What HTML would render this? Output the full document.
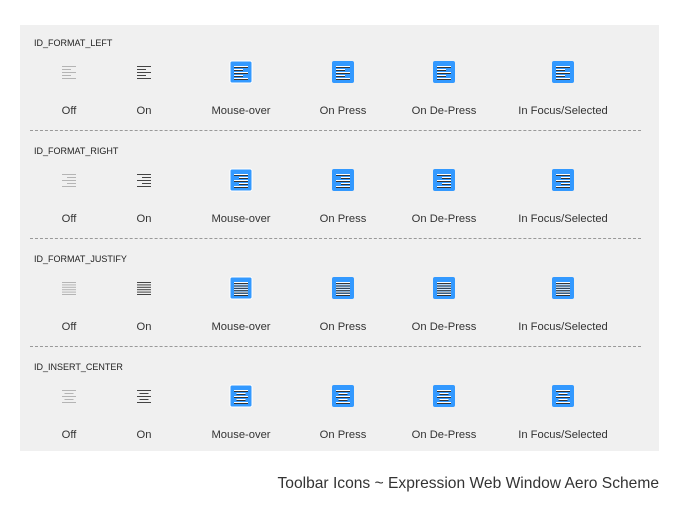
<!DOCTYPE html><html><head><style>
body{margin:0;width:679px;height:519px;background:#fff;font-family:"Liberation Sans",sans-serif;position:relative;overflow:hidden}
#p{position:absolute;left:20px;top:25px;width:639px;height:426px;background:#f0f0f0}
.t{position:absolute;left:14px;font-size:9px;color:#222}
.l{position:absolute;font-size:11.2px;color:#333;transform:translateX(-50%);white-space:nowrap}
.d{position:absolute;left:10px;width:611px;border-top:1px dashed #999}
.i{position:absolute}
.cap{position:absolute;right:20px;top:475px;font-size:15.6px;color:#333}
</style></head><body>
<div id="p">
<div class="t" style="top:13px">ID_FORMAT_LEFT</div>
<div class="t" style="top:121px">ID_FORMAT_RIGHT</div>
<div class="t" style="top:229px">ID_FORMAT_JUSTIFY</div>
<div class="t" style="top:337px">ID_INSERT_CENTER</div>
<div class="d" style="top:105px"></div><div class="d" style="top:213px"></div><div class="d" style="top:321px"></div>
</div>
<div class="cap">Toolbar Icons ~ Expression Web Window Aero Scheme</div>
<script>
(function(){
var p=document.getElementById('p');
var cx=[49,124,221,323,424,543];
var names=['Off','On','Mouse-over','On Press','On De-Press','In Focus/Selected'];
var pats=[
[[0,14],[0,9],[0,14],[0,9],[0,14]],
[[0,14],[5,9],[0,14],[5,9],[0,14]],
[[0,14],[0,14],[0,14],[0,14],[0,14],[0,14]],
[[0,14],[2.5,9],[0,14],[2.5,9],[0,14]]];
for(var s=0;s<4;s++){
 var ty=s*108;
 for(var c=0;c<6;c++){
  var L=document.createElement('div');L.className='l';L.style.left=cx[c]+'px';L.style.top=(ty+80)+'px';L.textContent=names[c];p.appendChild(L);
  var pat=pats[s],n=pat.length,sp=n==6?2.4:3;
  var svg='<svg width="24" height="24" xmlns="http://www.w3.org/2000/svg">';
  if(c>=2){
   var st=c==2?'stroke="#fff" stroke-width="1"':'';
   svg+='<rect x="1" y="1" width="22" height="22" rx="2" fill="#3399ff" '+st+'/>';
  }
  for(var k=0;k<n;k++){
   var y=6+k*sp;
   if(c<2){svg+='<rect x="'+(5+pat[k][0])+'" y="'+y+'" width="'+pat[k][1]+'" height="1" fill="'+(c==0?'#b4b4b4':'#444')+'"/>';}
   else{svg+='<rect x="'+(5+pat[k][0])+'" y="'+y+'" width="'+pat[k][1]+'" height="1" fill="#fff"/><rect x="'+(5+pat[k][0])+'" y="'+(y+1)+'" width="'+pat[k][1]+'" height="1" fill="#333"/>';}
  }
  svg+='</svg>';
  var I=document.createElement('div');I.className='i';I.style.left=(cx[c]-12)+'px';I.style.top=(ty+35)+'px';I.innerHTML=svg;p.appendChild(I);
 }
}
})();
</script>
</body></html>
